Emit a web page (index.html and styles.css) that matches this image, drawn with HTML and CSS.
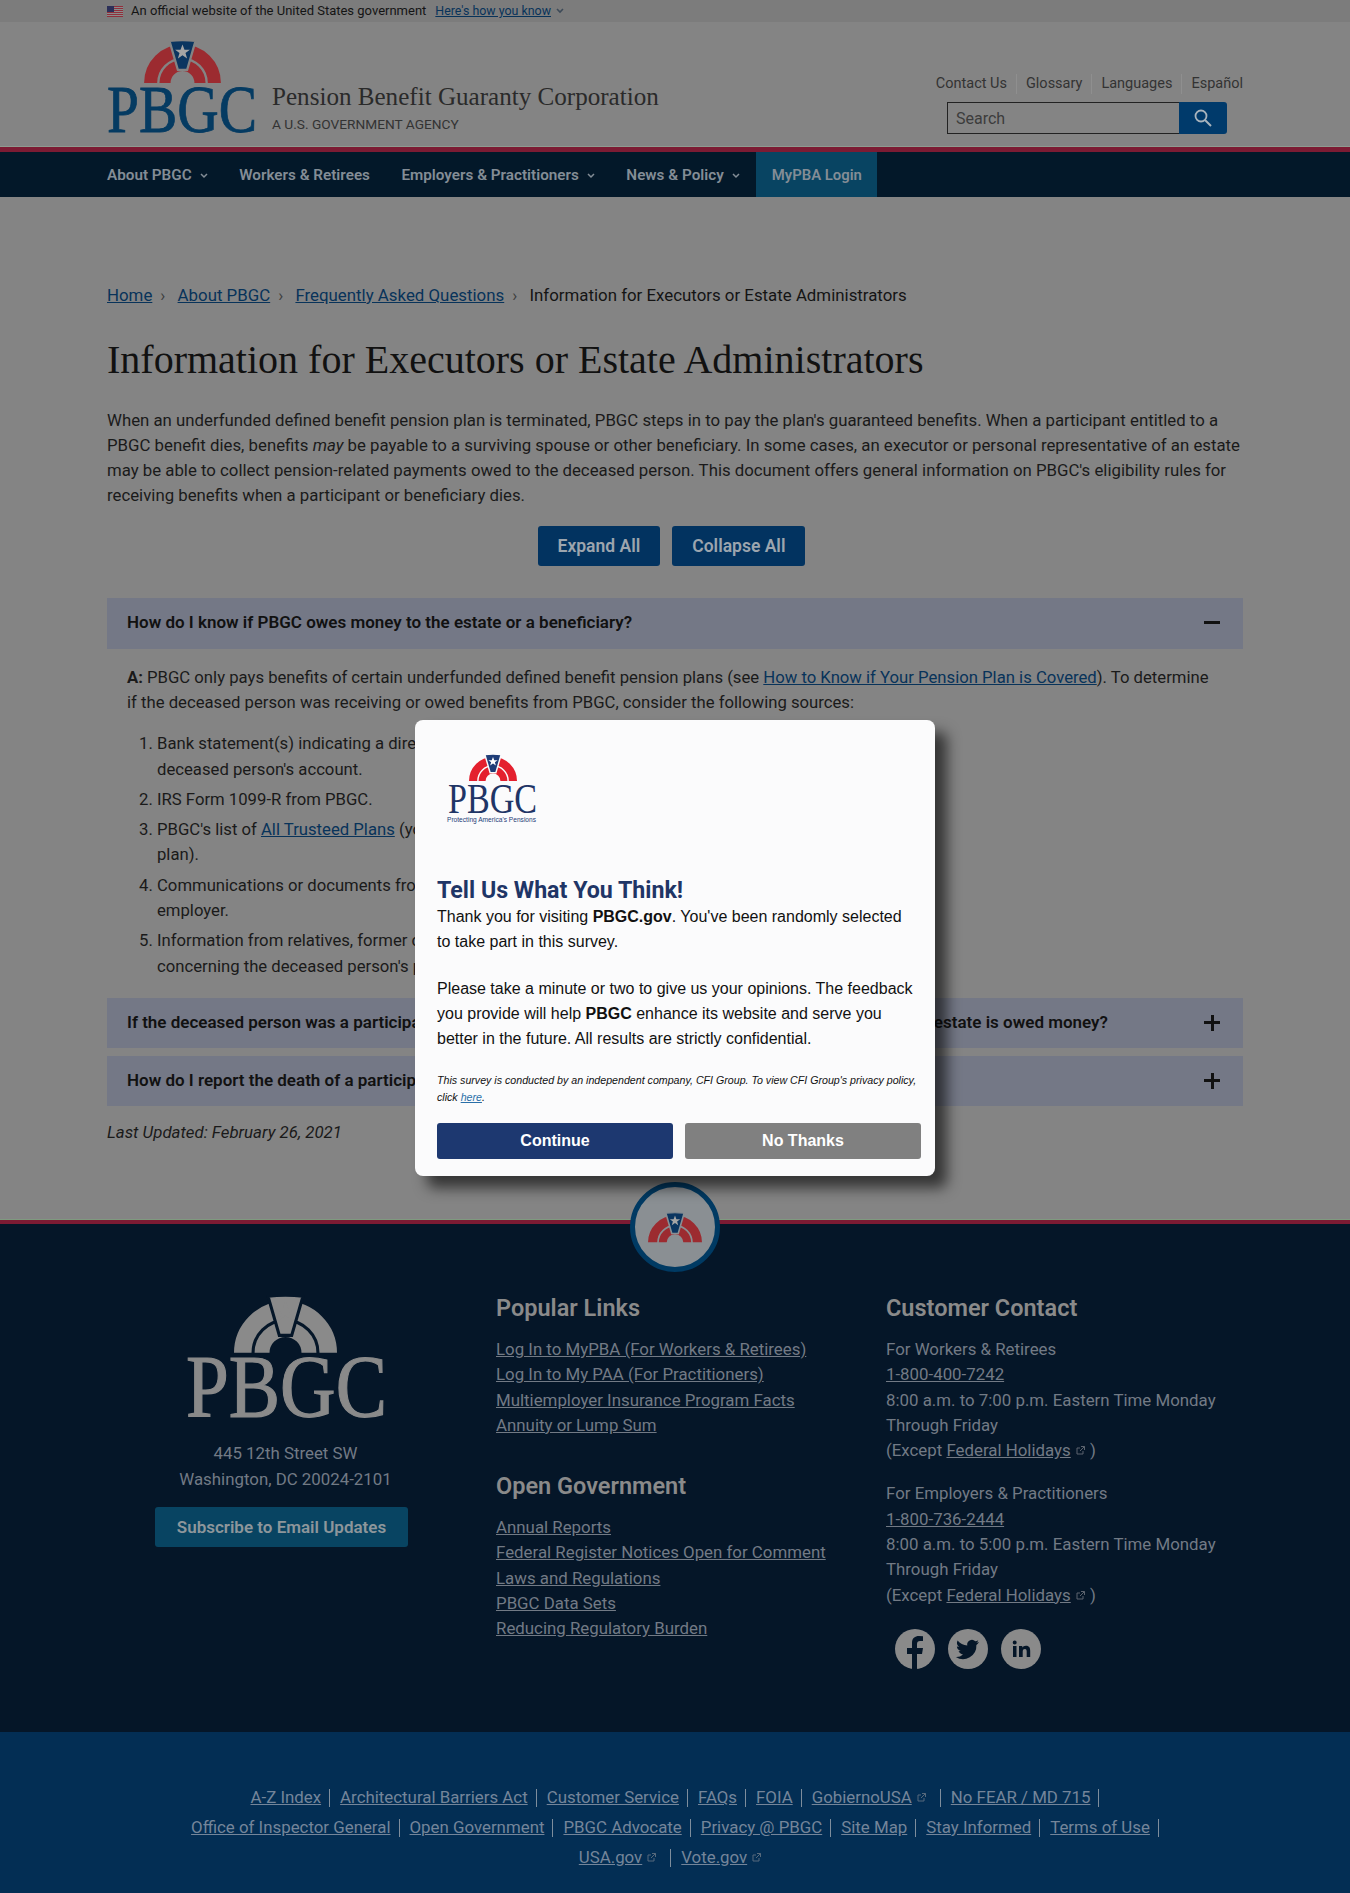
FILE: index.html
```html
<!DOCTYPE html>
<html lang="en">

<head>
  <meta charset="UTF-8">
  <title>Information for Executors or Estate Administrators | Pension Benefit Guaranty Corporation</title>
  <link rel="stylesheet" href="styles.css">
</head>

<body>
  <svg class="defs" width="0" height="0">
    <symbol id="arch" viewBox="0 0 100 56">
      <path class="arch-band" stroke-width="17" d="M8.500 56A41.500 41.500 0 0 1 91.500 56" />
      <path class="arch-band" stroke-width="14.500" d="M27.250 56A22.750 22.750 0 0 1 72.750 56" />
      <path class="arch-badge" d="M33 1Q50 -1 67 1L56 39H44Z" />
      <path class="arch-star" d="M50 6l2.600 6.700h7l-5.700 4.300 2.100 7-6-4.300-6 4.300 2.100-7-5.700-4.300h7z" />
    </symbol>
  </svg>

  <div class="banner">
    <div class="wrap banner-in">
      <svg class="flag" width="16" height="11" viewBox="0 0 16 11">
        <rect width="16" height="11" fill="#8a8a8a" />
        <rect y="0" width="16" height="1" fill="#8f2f3c" />
        <rect y="2" width="16" height="1" fill="#8f2f3c" />
        <rect y="4" width="16" height="1" fill="#8f2f3c" />
        <rect y="6" width="16" height="1" fill="#8f2f3c" />
        <rect y="8" width="16" height="1" fill="#8f2f3c" />
        <rect y="10" width="16" height="1" fill="#8f2f3c" />
        <rect width="7" height="6" fill="#2b2f58" />
      </svg>
      <span>An official website of the United States government</span>
      <a href="#" class="how">Here's how you know</a>
      <svg class="chev" width="8" height="6" viewBox="0 0 8 6"><path d="M1 1l3 3 3-3" fill="none" stroke="#3d4a58" stroke-width="1.6" /></svg>
    </div>
  </div>

  <header class="head">
    <div class="wrap head-in">
      <a href="#" class="logo">
        <svg class="logo-head" width="154" height="100" viewBox="0 0 154 100">
          <use href="#arch" x="37" y="0" width="77" height="43" />
          <text x="0" y="92" textLength="150" lengthAdjust="spacingAndGlyphs" class="logo-txt">PBGC</text>
        </svg>
      </a>
      <div class="agency">
        <div class="agency-name">Pension Benefit Guaranty Corporation</div>
        <div class="agency-sub">A U.S. GOVERNMENT AGENCY</div>
      </div>
      <div class="head-right">
        <div class="toplinks">
          <a href="#">Contact Us</a>
          <a href="#">Glossary</a>
          <a href="#">Languages</a>
          <a href="#">Español</a>
        </div>
        <form class="search">
          <div class="search-box">Search</div>
          <div class="search-btn">
            <svg width="20" height="20" viewBox="0 0 20 20"><circle cx="8" cy="8" r="5.500" fill="none" stroke="#a9b4bd" stroke-width="1.800" /><path d="M12 12l6 6" stroke="#a9b4bd" stroke-width="2" /></svg>
          </div>
        </form>
      </div>
    </div>
  </header>

  <nav class="nav">
    <div class="wrap nav-in">
      <a href="#" class="nav-item">About PBGC <svg class="nav-chev" width="8" height="6" viewBox="0 0 8 6"><path d="M1 1l3 3 3-3" /></svg></a>
      <a href="#" class="nav-item">Workers &amp; Retirees</a>
      <a href="#" class="nav-item">Employers &amp; Practitioners <svg class="nav-chev" width="8" height="6" viewBox="0 0 8 6"><path d="M1 1l3 3 3-3" /></svg></a>
      <a href="#" class="nav-item">News &amp; Policy <svg class="nav-chev" width="8" height="6" viewBox="0 0 8 6"><path d="M1 1l3 3 3-3" /></svg></a>
      <a href="#" class="nav-item nav-login">MyPBA Login</a>
    </div>
  </nav>

  <main class="wrap main">
    <div class="crumbs">
      <a href="#">Home</a><span class="sep">›</span>
      <a href="#">About PBGC</a><span class="sep">›</span>
      <a href="#">Frequently Asked Questions</a><span class="sep">›</span>
      <span>Information for Executors or Estate Administrators</span>
    </div>

    <h1>Information for Executors or Estate Administrators</h1>

    <p class="intro">When an underfunded defined benefit pension plan is terminated, PBGC steps in to pay the plan's guaranteed benefits. When a participant entitled to a<br>PBGC benefit dies, benefits <em>may</em> be payable to a surviving spouse or other beneficiary. In some cases, an executor or personal representative of an estate<br>may be able to collect pension-related payments owed to the deceased person. This document offers general information on PBGC's eligibility rules for<br>receiving benefits when a participant or beneficiary dies.</p>

    <div class="expand-row">
      <a href="#" class="btn">Expand All</a>
      <a href="#" class="btn">Collapse All</a>
    </div>

    <div class="acc-head acc-first">
      <span>How do I know if PBGC owes money to the estate or a beneficiary?</span>
      <span class="acc-icon minus"></span>
    </div>
    <div class="acc-body">
      <p><strong>A:</strong> PBGC only pays benefits of certain underfunded defined benefit pension plans (see <a href="#">How to Know if Your Pension Plan is Covered</a>). To determine<br>if the deceased person was receiving or owed benefits from PBGC, consider the following sources:</p>
      <ol>
        <li>Bank statement(s) indicating a direct deposit from PBGC into the<br>deceased person's account.</li>
        <li>IRS Form 1099-R from PBGC.</li>
        <li>PBGC's list of <a href="#">All Trusteed Plans</a> (you can search by the name of the<br>plan).</li>
        <li>Communications or documents from PBGC or a former<br>employer.</li>
        <li>Information from relatives, former coworkers or other people<br>concerning the deceased person's pension.</li>
      </ol>
    </div>
    <div class="acc-head">
      <span>If the deceased person was a participant or beneficiary in a plan trusteed by PBGC, how do I find out if the estate is owed money?</span>
      <span class="acc-icon plus"></span>
    </div>
    <div class="acc-head">
      <span>How do I report the death of a participant or beneficiary?</span>
      <span class="acc-icon plus"></span>
    </div>
    <p class="updated">Last Updated: February 26, 2021</p>
  </main>

  <footer class="foot">
    <div class="seal">
      <svg class="logo-seal" width="54" height="31" viewBox="0 0 100 56"><use href="#arch" width="100" height="56" /></svg>
    </div>
    <div class="wrap foot-top">
      <div class="foot-addr">
        <svg class="foot-logo" width="204" height="125" viewBox="0 0 204 125">
          <use href="#arch" x="48" y="0" width="103" height="58" />
          <text x="0" y="121" textLength="201" lengthAdjust="spacingAndGlyphs" class="foot-logo-txt">PBGC</text>
        </svg>
        <div class="addr">445 12th Street SW<br>Washington, DC 20024-2101</div>
        <a href="#" class="btn-sub">Subscribe to Email Updates</a>
      </div>
      <div class="foot-links">
        <h2>Popular Links</h2>
        <ul>
          <li><a href="#">Log In to MyPBA (For Workers &amp; Retirees)</a></li>
          <li><a href="#">Log In to My PAA (For Practitioners)</a></li>
          <li><a href="#">Multiemployer Insurance Program Facts</a></li>
          <li><a href="#">Annuity or Lump Sum</a></li>
        </ul>
        <h2 class="h2-second">Open Government</h2>
        <ul>
          <li><a href="#">Annual Reports</a></li>
          <li><a href="#">Federal Register Notices Open for Comment</a></li>
          <li><a href="#">Laws and Regulations</a></li>
          <li><a href="#">PBGC Data Sets</a></li>
          <li><a href="#">Reducing Regulatory Burden</a></li>
        </ul>
      </div>
      <div class="foot-contact">
        <h2>Customer Contact</h2>
        <p>For Workers &amp; Retirees<br><a href="#">1-800-400-7242</a><br>8:00 a.m. to 7:00 p.m. Eastern Time Monday<br>Through Friday<br>(Except <a href="#">Federal Holidays</a><svg class="ext" width="11" height="11" viewBox="0 0 11 11"><path d="M8 6v3H2V3h3M6 1.500h3.500V5M9.500 1.500L5 6" /></svg> )</p>
        <p>For Employers &amp; Practitioners<br><a href="#">1-800-736-2444</a><br>8:00 a.m. to 5:00 p.m. Eastern Time Monday<br>Through Friday<br>(Except <a href="#">Federal Holidays</a><svg class="ext" width="11" height="11" viewBox="0 0 11 11"><path d="M8 6v3H2V3h3M6 1.500h3.500V5M9.500 1.500L5 6" /></svg> )</p>
        <div class="social">
          <svg width="40" height="40" viewBox="0 0 40 40"><circle cx="20" cy="20" r="20" fill="#8a8a8a" /><path d="M17 40V25h-5v-6h5v-5c0-5 3-7 7-7l4 .3V12h-3c-2 0-3 1-3 3v4h6l-1 6h-5v15z" fill="#051628" /></svg>
          <svg width="40" height="40" viewBox="0 0 40 40"><circle cx="20" cy="20" r="20" fill="#8a8a8a" /><path d="M31 13c-1 .5-2 .7-2.700.8 1-.6 1.700-1.500 2-2.600-.9.500-1.900.9-3 1.100a4.700 4.700 0 0 0-8 4.300c-3.900-.2-7.400-2.100-9.700-5-1.300 2.200-.6 5 1.400 6.300-.8 0-1.500-.2-2.100-.6 0 2.300 1.600 4.300 3.800 4.700-.7.200-1.400.2-2.100.1.600 1.900 2.300 3.200 4.400 3.300A9.500 9.500 0 0 1 7.800 28a13.400 13.400 0 0 0 20.600-11.900c1-.7 1.900-1.700 2.600-3.100z" fill="#051628" /></svg>
          <svg width="40" height="40" viewBox="0 0 40 40"><circle cx="20" cy="20" r="20" fill="#8a8a8a" /><path d="M12 17h3.500v11H12zM13.700 11.500a2 2 0 1 1 0 4 2 2 0 0 1 0-4zM18 17h3.300v1.600c.6-1 1.800-1.900 3.600-1.900 3.600 0 4.300 2.300 4.300 5.400V28h-3.500v-5.200c0-1.300 0-2.900-1.800-2.900s-2.200 1.400-2.200 2.800V28H18z" fill="#051628" /></svg>
        </div>
      </div>
    </div>

    <div class="foot-bottom">
      <div class="bot-row">
        <span class="bot-item"><a href="#">A-Z Index</a></span>
        <span class="bot-item"><a href="#">Architectural Barriers Act</a></span>
        <span class="bot-item"><a href="#">Customer Service</a></span>
        <span class="bot-item"><a href="#">FAQs</a></span>
        <span class="bot-item"><a href="#">FOIA</a></span>
        <span class="bot-item bot-ext"><a href="#">GobiernoUSA</a><svg class="ext ext-b" width="11" height="11" viewBox="0 0 11 11"><path d="M8 6v3H2V3h3M6 1.500h3.500V5M9.500 1.500L5 6" /></svg></span>
        <span class="bot-item"><a href="#">No FEAR / MD 715</a></span>
      </div>
      <div class="bot-row">
        <span class="bot-item"><a href="#">Office of Inspector General</a></span>
        <span class="bot-item"><a href="#">Open Government</a></span>
        <span class="bot-item"><a href="#">PBGC Advocate</a></span>
        <span class="bot-item"><a href="#">Privacy @ PBGC</a></span>
        <span class="bot-item"><a href="#">Site Map</a></span>
        <span class="bot-item"><a href="#">Stay Informed</a></span>
        <span class="bot-item"><a href="#">Terms of Use</a></span>
      </div>
      <div class="bot-row">
        <span class="bot-item bot-ext"><a href="#">USA.gov</a><svg class="ext ext-b" width="11" height="11" viewBox="0 0 11 11"><path d="M8 6v3H2V3h3M6 1.500h3.500V5M9.500 1.500L5 6" /></svg></span>
        <span class="bot-item no-bar"><a href="#">Vote.gov</a><svg class="ext ext-b" width="11" height="11" viewBox="0 0 11 11"><path d="M8 6v3H2V3h3M6 1.500h3.500V5M9.500 1.500L5 6" /></svg></span>
      </div>
    </div>
  </footer>

  <div class="modal">
    <svg class="modal-logo" width="92" height="72" viewBox="0 0 92 72">
      <use href="#arch" x="22" y="0" width="48" height="29" />
      <text x="1" y="60" textLength="89" lengthAdjust="spacingAndGlyphs" class="modal-logo-txt">PBGC</text>
      <text x="0" y="69" textLength="89" lengthAdjust="spacingAndGlyphs" class="modal-logo-sub">Protecting America's Pensions</text>
    </svg>
    <h3>Tell Us What You Think!</h3>
    <p class="modal-p">Thank you for visiting <strong>PBGC.gov</strong>. You've been randomly selected to take part in this survey.</p>
    <p class="modal-p">Please take a minute or two to give us your opinions. The feedback you provide will help <strong>PBGC</strong> enhance its website and serve you better in the future. All results are strictly confidential.</p>
    <p class="modal-small">This survey is conducted by an independent company, CFI Group. To view CFI Group's privacy policy, click <a href="#">here</a>.</p>
    <div class="modal-btns">
      <button class="mbtn mbtn-go">Continue</button>
      <button class="mbtn mbtn-no">No Thanks</button>
    </div>
  </div>
</body>

</html>
```

FILE: styles.css
```css
* {
  box-sizing: border-box;
}

body {
  margin: 0;
  background-color: #848484;
  font-family: Roboto, "Liberation Sans", sans-serif;
  font-size: 16.850px;
  line-height: 25.3px;
  color: #1a1a1a;
  position: relative;
  height: 1893px;
  overflow: hidden;
}

a {
  color: #08335a;
}

svg {
  overflow: visible;
}

.defs {
  position: absolute;
}

.arch-band {
  fill: none;
  stroke: var(--band);
}

.arch-badge {
  fill: var(--badge);
  stroke: var(--gap);
  stroke-width: 3;
}

.arch-star {
  fill: var(--star);
}

.wrap {
  width: 1136px;
  margin: 0 auto;
}

/* gov banner */
.banner {
  height: 22px;
  background-color: #7c7c7c;
  font-size: 13px;
  line-height: 22px;
  color: #141414;
}

.banner-in {
  display: flex;
  align-items: center;
}

.flag {
  margin-right: 8px;
}

.how {
  margin-left: 9px;
  font-size: 12.400px;
  color: #08335a;
}

.chev {
  margin-left: 5px;
}

/* header */
.head {
  height: 125px;
  border-bottom: 1px solid #8f9a8f;
}

.head-in {
  display: flex;
  height: 100%;
}

.logo {
  display: block;
  margin-top: 18px;
  height: 100px;
}

.logo-head {
  display: block;
  --band: #9c2b30;
  --badge: #0a3560;
  --gap: #848484;
  --star: #a5a5a5;
}

.logo-txt {
  font-family: "Liberation Serif", serif;
  font-size: 68px;
  fill: #053b62;
  stroke: #053b62;
  stroke-width: 0.800;
}

.agency {
  margin-left: 11px;
  margin-top: 60px;
}

.agency-name {
  font-family: "Liberation Serif", serif;
  font-size: 25.100px;
  line-height: 30px;
  color: #2a2a2a;
}

.agency-sub {
  font-size: 13.700px;
  line-height: 20px;
  margin-top: 2px;
  color: #333;
}

.head-right {
  margin-left: auto;
  padding-top: 52px;
}

.toplinks {
  display: flex;
  justify-content: flex-end;
  font-size: 14.500px;
  line-height: 20px;
}

.toplinks a {
  color: #333;
  text-decoration: none;
  padding: 0 9px;
  border-right: 1px solid #8f8f8f;
}

.toplinks a:last-child {
  border-right: 0;
  padding-right: 0;
}

.search {
  display: flex;
  margin-top: 8px;
  margin-right: 16px;
  justify-content: flex-end;
}

.search-box {
  width: 232px;
  height: 32px;
  border: 1px solid #222;
  border-right: 0;
  padding-left: 8px;
  font-size: 16px;
  line-height: 31px;
  color: #3c3c3c;
}

.search-btn {
  width: 48px;
  height: 32px;
  background-color: #003a6b;
  border-radius: 0 3px 3px 0;
  display: flex;
  align-items: center;
  justify-content: center;
}

/* nav */
.nav {
  height: 50px;
  border-top: 5px solid #7c1b33;
  background-color: #031829;
}

.nav-in {
  display: flex;
  height: 45px;
}

.nav-item {
  display: flex;
  align-items: center;
  gap: 8px;
  padding-top: 2px;
  font-size: 15.250px;
  font-weight: 600;
  color: #838d96;
  text-decoration: none;
  margin-right: 31.500px;
}

.nav-chev path {
  fill: none;
  stroke: #838d96;
  stroke-width: 1.500;
}

.nav-login {
  background-color: #084462;
  padding: 2px 15.500px 0;
  margin-left: -15px;
  margin-right: 0;
  font-size: 14.900px;
}

/* main */
.main {
  padding-top: 85px;
}

.crumbs {
  height: 26px;
  line-height: 26px;
  color: #141414;
}

.sep {
  margin: 0 8px;
  color: #3d3d3d;
}

h1 {
  margin: 28px 0 0;
  font-family: "Liberation Serif", serif;
  font-size: 40px;
  line-height: 48px;
  font-weight: normal;
  color: #111;
}

.intro {
  margin: 23.500px 0 0;
  font-size: 16.800px;
  white-space: nowrap;
}

.expand-row {
  display: flex;
  justify-content: center;
  gap: 12px;
  margin-top: 17px;
  margin-right: 7px;
}

.btn {
  display: block;
  height: 40px;
  padding: 0 20px;
  background-color: #023360;
  border-radius: 3px;
  color: #9ca5ae;
  font-size: 17.500px;
  font-weight: 600;
  line-height: 40px;
  text-decoration: none;
}

.acc-head {
  display: flex;
  justify-content: space-between;
  align-items: center;
  height: 50px;
  padding: 0 23px 0 20px;
  margin-bottom: 8px;
  background-color: #747886;
  font-weight: 600;
  font-size: 17px;
  color: #111;
}

.acc-first {
  margin-top: 32px;
  margin-bottom: 0;
  height: 51px;
  padding-bottom: 1px;
}

.acc-icon {
  width: 16px;
  height: 16px;
  position: relative;
  flex-shrink: 0;
}

.acc-icon::before,
.plus::after {
  content: "";
  position: absolute;
  background-color: #111;
}

.acc-icon::before {
  left: 0;
  right: 0;
  top: 6.500px;
  height: 3px;
}

.plus::after {
  top: 0;
  bottom: 0;
  left: 6.500px;
  width: 3px;
}

.acc-body {
  padding: 16.500px 20px 19px;
  font-size: 16.700px;
}

.acc-body p {
  margin: 0;
}

.acc-body ol {
  margin: 15.500px 0 0;
  padding-left: 30px;
}

.acc-body li {
  margin-bottom: 5px;
}

.acc-body li:last-child {
  margin-bottom: 0;
}

.updated {
  margin: 14px 0 0;
  font-style: italic;
}

/* footer */
.foot {
  position: absolute;
  top: 1219px;
  left: 0;
  right: 0;
  bottom: 0;
  border-top: 1px solid #7f9a7f;
  background-color: #051628;
  color: #727a85;
}

.foot::before {
  content: "";
  display: block;
  height: 4px;
  background-color: #7c1b33;
}

.seal {
  position: absolute;
  left: 630px;
  top: -38px;
  width: 90px;
  height: 90px;
  border-radius: 50%;
  border: 5px solid #003a63;
  background-color: #8a8f93;
  display: flex;
  align-items: center;
  justify-content: center;
}

.logo-seal {
  --band: #9c2b30;
  --badge: #0a3560;
  --gap: #8a8f93;
  --star: #a5a5a5;
}

.foot-top {
  display: flex;
  height: 508px;
  padding-top: 69px;
}

.foot-top a {
  color: #727a85;
}

.foot-addr {
  width: 389px;
  padding-right: 32px;
  text-align: center;
}

.foot-logo {
  display: block;
  margin: 2px 0 0 79px;
  --band: #8a8a8a;
  --badge: #8a8a8a;
  --gap: #051628;
  --star: #8a8a8a;
}

.foot-logo-txt {
  font-family: "Liberation Serif", serif;
  font-size: 88px;
  fill: #8a8a8a;
  stroke: #8a8a8a;
  stroke-width: 1.200;
}

.addr {
  margin-top: 20px;
  line-height: 26px;
}

.foot-top .btn-sub {
  display: block;
  width: 253px;
  height: 40px;
  margin: 14.500px 0 0 48px;
  background-color: #084462;
  border-radius: 3px;
  line-height: 40px;
  font-weight: 600;
  font-size: 17px;
  text-decoration: none;
  color: #8d969b;
}

.foot-links {
  width: 390px;
}

.foot-top h2 {
  margin: 0 0 14px;
  font-size: 23.500px;
  line-height: 30px;
  font-weight: 600;
  color: #8a8a8a;
}

.foot-top .h2-second {
  margin-top: 33px;
}

.foot-top ul {
  margin: 0;
  padding: 0;
  list-style: none;
}

.foot-contact {
  flex: 1;
}

.foot-contact p {
  margin: 0 0 18px;
}

.ext {
  margin-left: 4px;
}

.ext path {
  fill: none;
  stroke: #5c636e;
  stroke-width: 1;
}

.ext-b path {
  stroke: #56697c;
}

.social {
  display: flex;
  gap: 13px;
  padding-left: 9px;
  margin-top: 21.500px;
}

.foot-bottom {
  height: 161px;
  background-color: #032e54;
  padding-top: 52px;
}

.bot-row {
  height: 30px;
  display: flex;
  justify-content: center;
  gap: 10px;
}

.bot-item {
  position: relative;
  padding-right: 9px;
  line-height: 26px;
}

.bot-ext {
  padding-right: 14px;
}

.bot-item a {
  color: #74859a;
}

.bot-item::after {
  content: "";
  position: absolute;
  right: 0;
  top: 5px;
  height: 18px;
  width: 1px;
  background-color: #7e8d9c;
}

.no-bar::after {
  display: none;
}

/* survey popup */
.modal {
  position: absolute;
  left: 415px;
  top: 720px;
  width: 520px;
  height: 456px;
  padding: 22px;
  border-radius: 8px;
  background-color: #fbfbfc;
  box-shadow: 12px 12px 14px rgba(0, 0, 0, 0.6);
  font-family: "Liberation Sans", sans-serif;
  font-size: 16px;
  line-height: 25px;
  color: #111;
}

.modal-logo {
  display: block;
  margin: 11px 0 0 10px;
  --band: #e4202e;
  --badge: #1f3d78;
  --gap: #fbfbfc;
  --star: #fff;
}

.modal-logo-txt {
  font-family: "Liberation Serif", serif;
  font-size: 42px;
  fill: #1f3566;
}

.modal-logo-sub {
  font-family: "Liberation Sans", sans-serif;
  font-size: 7px;
  fill: #1f3d78;
}

.modal h3 {
  margin: 51px 0 0;
  font-family: Roboto, sans-serif;
  font-size: 23.200px;
  line-height: 28px;
  font-weight: 700;
  color: #1f3566;
}

.modal-p {
  margin: 0 0 21.500px;
}

.modal-small {
  margin: 0;
  margin-right: -14px;
  font-size: 10.650px;
  font-style: italic;
  line-height: 17px;
}

.modal-small a {
  color: #2a6fa8;
}

.modal-btns {
  display: flex;
  gap: 12px;
  margin-top: 16.500px;
  margin-right: -8px;
}

.mbtn {
  flex: 1;
  height: 36px;
  border: 0;
  border-radius: 3px;
  color: #fff;
  font-family: "Liberation Sans", sans-serif;
  font-size: 16px;
  font-weight: 700;
}

.mbtn-go {
  background-color: #1d3870;
}

.mbtn-no {
  background-color: #808080;
}
```
